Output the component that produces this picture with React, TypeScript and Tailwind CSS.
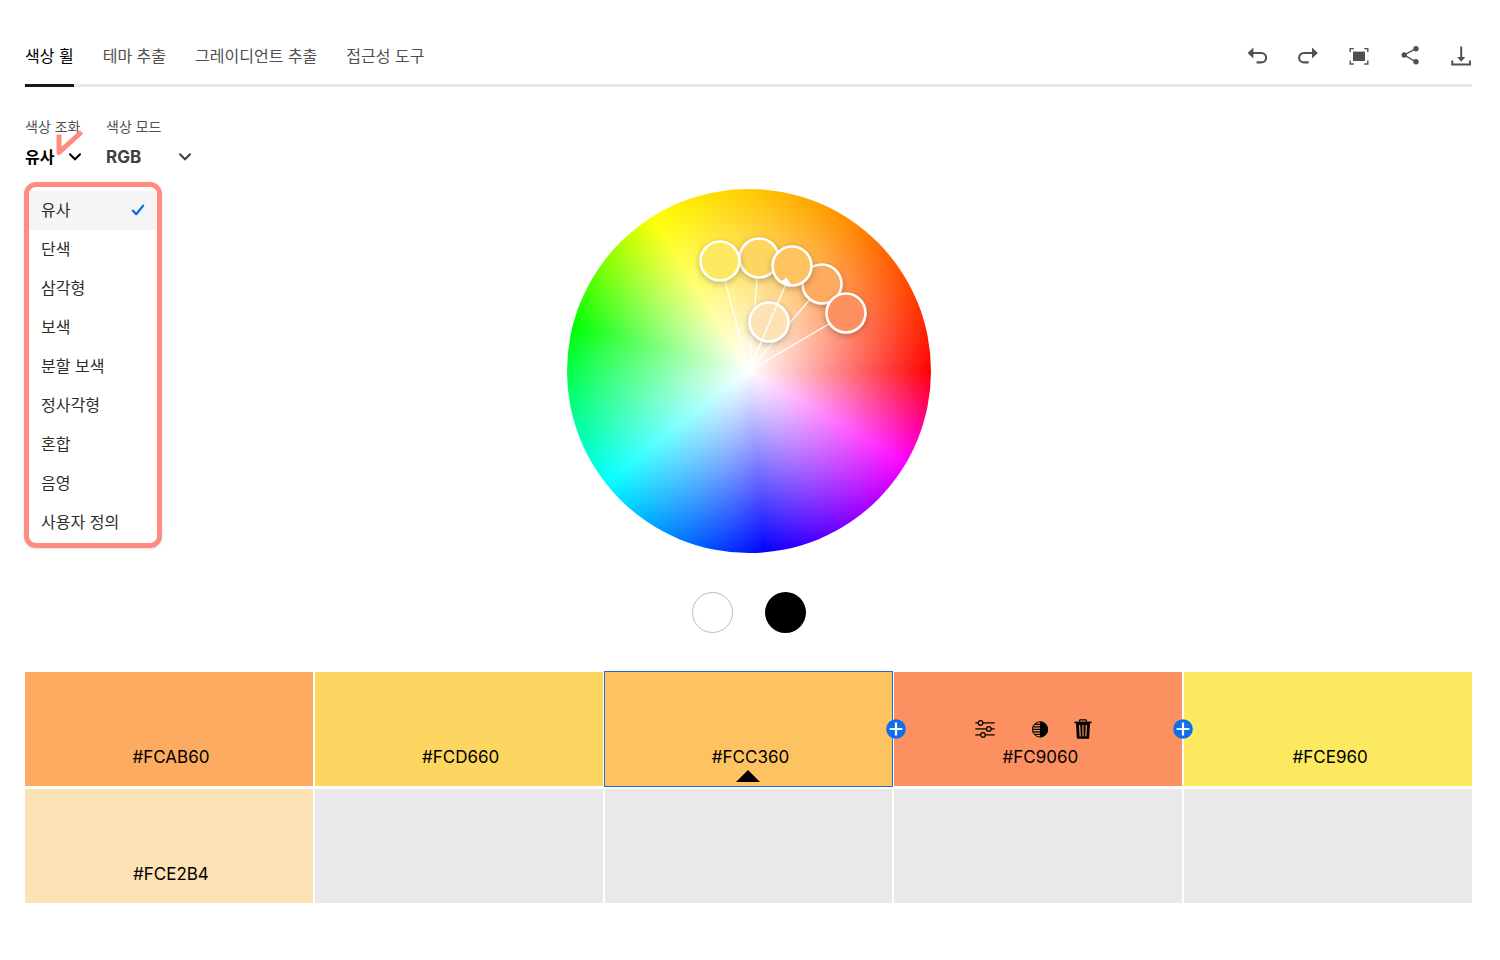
import React, { useState } from 'react';

const tabs = ['색상 휠', '테마 추출', '그레이디언트 추출', '접근성 도구'];

const harmonies = ['유사', '단색', '삼각형', '보색', '분할 보색', '정사각형', '혼합', '음영', '사용자 정의'];

const swatches: (string | null)[] = [
  '#FCAB60', '#FCD660', '#FCC360', '#FC9060', '#FCE960',
  '#FCE2B4', null, null, null, null,
];

const UndoIcon = () => (
  <svg viewBox="0 0 20 20" className="size-5" aria-hidden="true">
    <path d="M0.6 7 L6.4 1.6 V12.4 Z" fill="currentColor" />
    <path d="M5 7 H14.4 A4.7 4.7 0 0 1 14.4 16.4 H9.6" fill="none" stroke="currentColor" strokeWidth="2.1" />
  </svg>
);

const RedoIcon = () => (
  <svg viewBox="0 0 20 20" className="size-5" aria-hidden="true">
    <path d="M19.8 7 L14 1.6 V12.4 Z" fill="currentColor" />
    <path d="M15 7 H5.8 A4.7 4.7 0 0 0 5.8 16.4 H10.6" fill="none" stroke="currentColor" strokeWidth="2.1" />
  </svg>
);

const FullscreenIcon = () => (
  <svg viewBox="0 0 20 20" className="size-5" aria-hidden="true">
    <path
      d="M1.2 6 V2.6 H4.8 M15.2 2.6 H18.8 V6 M18.8 14.6 V18 H15.2 M4.8 18 H1.2 V14.6"
      fill="none"
      stroke="currentColor"
      strokeWidth="1.4"
    />
    <rect x="4" y="5.6" width="12" height="9.4" fill="currentColor" />
  </svg>
);

const ShareIcon = () => (
  <svg viewBox="0 0 20 20" className="size-5" aria-hidden="true">
    <path d="M16 2.7 L4.3 9 L16 15.8" fill="none" stroke="currentColor" strokeWidth="1.4" />
    <circle cx="4.2" cy="9" r="2.7" fill="currentColor" />
    <circle cx="16" cy="2.8" r="2.7" fill="currentColor" />
    <circle cx="16" cy="15.8" r="2.7" fill="currentColor" />
  </svg>
);

const DownloadIcon = () => (
  <svg viewBox="0 0 20 20" className="size-5" aria-hidden="true">
    <path d="M10.2 0.5 V13" stroke="currentColor" strokeWidth="2" />
    <path d="M6.2 11 H14.2 L10.2 15.8 Z" fill="currentColor" />
    <path d="M1.3 14.6 V18.6 H19.1 V14.6" fill="none" stroke="currentColor" strokeWidth="2" />
  </svg>
);

const ChevronIcon = () => (
  <svg viewBox="0 0 12 8" className="w-3 h-2 shrink-0" aria-hidden="true">
    <path d="M1 1.3 L6 6.3 L11 1.3" fill="none" stroke="currentColor" strokeWidth="2" strokeLinecap="round" />
  </svg>
);

const CheckIcon = () => (
  <svg viewBox="0 0 14 12" className="w-3.5 h-3 shrink-0 text-[#0d66e0]" aria-hidden="true">
    <path d="M1.8 6.6 L5.2 10.2 L12.2 1.6" fill="none" stroke="currentColor" strokeWidth="2.2" strokeLinecap="round" strokeLinejoin="round" />
  </svg>
);

const SlidersIcon = () => (
  <svg viewBox="0 0 20 18" className="w-5 h-[18px]" aria-hidden="true">
    <g fill="none" stroke="currentColor" strokeWidth="1.3">
      <path d="M0.3 2.9 H3.2 M8 2.9 H19.7 M0.3 8.9 H11.4 M16.2 8.9 H19.7 M0.3 14.9 H5.6 M10.4 14.9 H19.7" />
      <circle cx="5.6" cy="2.9" r="2.3" />
      <circle cx="13.8" cy="8.9" r="2.3" />
      <circle cx="8" cy="14.9" r="2.3" />
    </g>
  </svg>
);

const ContrastIcon = () => (
  <svg viewBox="0 0 18 18" className="size-[18px]" aria-hidden="true">
    <circle cx="9" cy="9.4" r="7.6" fill="none" stroke="currentColor" strokeWidth="1" />
    <path d="M9 1.4 A8 8 0 0 1 9 17.4 Z" fill="currentColor" />
    <path d="M3.6 4.4 H9 M2 6.9 H9 M1.4 9.4 H9 M2 11.9 H9 M3.6 14.4 H9" stroke="currentColor" strokeWidth="1.2" />
  </svg>
);

const TrashIcon = () => (
  <svg viewBox="0 0 18 20" className="w-[18px] h-5" aria-hidden="true">
    <path d="M5.6 2.8 V1.6 Q5.6 0.8 6.4 0.8 H11.6 Q12.4 0.8 12.4 1.6 V2.8" fill="none" stroke="currentColor" strokeWidth="1.2" />
    <path d="M0.4 2.6 H17.6 V4.2 H0.4 Z" fill="currentColor" />
    <path
      fillRule="evenodd"
      d="M2 4 H16 L15.2 19 Q15.1 19.8 14.2 19.8 H3.8 Q2.9 19.8 2.8 19 Z M5 6 L5.6 17.4 H6.8 L6.3 6 Z M8.4 6 V17.4 H9.6 V6 Z M11.7 6 L11.2 17.4 H12.4 L13 6 Z"
      fill="currentColor"
    />
  </svg>
);

const tools = [
  { label: '실행 취소', Icon: UndoIcon },
  { label: '다시 실행', Icon: RedoIcon },
  { label: '전체 화면', Icon: FullscreenIcon },
  { label: '공유', Icon: ShareIcon },
  { label: '다운로드', Icon: DownloadIcon },
];

function Handle({ x, y, color }: { x: number; y: number; color: string }) {
  return (
    <circle
      cx={x}
      cy={y}
      r="19.5"
      fill={color}
      stroke="white"
      strokeWidth="2.6"
      className="drop-shadow-[0_2px_3px_rgba(0,0,0,0.25)]"
    />
  );
}

function ColorWheel() {
  return (
    <div className="size-[364px] rounded-full bg-[radial-gradient(closest-side,#ffffff,rgba(255,255,255,0)),conic-gradient(#ffca00_0deg,#ff9500_30deg,#ff0000_90deg,#ff00ff_120deg,#0000ff_175deg,#00ffff_232deg,#00ff00_285deg,#ffff00_328deg,#ffca00_360deg)]">
      <svg viewBox="0 0 364 364" className="size-full" role="img" aria-label="색상 휠">
        <g stroke="white" strokeWidth="1.3">
          <path d="M182 182 L153 73" />
          <path d="M182 182 L192 70" />
          <path d="M182 182 L255 96" />
          <path d="M182 182 L279 125" />
        </g>
        <Handle x={202} y={133} color="#FCE2B4" />
        <path d="M182 182 L221 90" stroke="white" strokeWidth="1.3" />
        <Handle x={255} y={95} color="#FCAB60" />
        <Handle x={279} y={124} color="#FC9060" />
        <Handle x={192} y={69} color="#FCD660" />
        <Handle x={225} y={77} color="#FCC360" />
        <path d="M219.5 88.5 L224 95.5 L213.5 93 Z" fill="white" />
        <Handle x={153} y={72} color="#FCE960" />
      </svg>
    </div>
  );
}

function AddButton({ className }: { className: string }) {
  return (
    <button type="button" aria-label="색상 추가" className={`absolute top-[47px] z-10 size-5 cursor-pointer ${className}`}>
      <svg viewBox="0 0 20 20" className="size-5" aria-hidden="true">
        <circle cx="10" cy="10" r="9.8" fill="#0d6ef0" />
        <path d="M10 3.6 V16.4 M3.6 10 H16.4" stroke="white" strokeWidth="2.2" />
      </svg>
    </button>
  );
}

export default function App() {
  const [activeTab, setActiveTab] = useState(tabs[0]);
  const [harmony, setHarmony] = useState(harmonies[0]);
  const [open, setOpen] = useState(true);

  return (
    <div className="bg-white pl-[25px] pr-7 pt-8 pb-14 font-['Inter','Noto_Sans_CJK_KR',sans-serif] text-[#2c2c2c]">
      {/* Tabs + toolbar */}
      <header className="flex items-stretch justify-between border-b-3 border-[#e8e8e8]">
        <nav className="flex gap-[29px]">
          {tabs.map((tab) => (
            <button
              key={tab}
              type="button"
              onClick={() => setActiveTab(tab)}
              className={`-mb-[3px] border-b-3 h-[55px] text-[16px] leading-6 flex items-start pt-3 cursor-pointer ${
                tab === activeTab ? 'border-[#1a1a1a] text-black' : 'border-transparent text-[#505050]'
              }`}
            >
              {tab}
            </button>
          ))}
        </nav>
        <div className="flex items-start gap-[31px] pt-3.5 pr-px text-[#505050]">
          {tools.map(({ label, Icon }) => (
            <button key={label} type="button" aria-label={label} className="cursor-pointer">
              <Icon />
            </button>
          ))}
        </div>
      </header>

      {/* Harmony and mode */}
      <div className="flex items-start gap-6 pt-[30px]">
        <div className="relative w-[57px]">
          <p id="harmony-label" className="text-[14px] leading-5 text-[#505050] whitespace-nowrap">색상 조화</p>
          <button
            type="button"
            aria-haspopup="listbox"
            aria-expanded={open}
            aria-labelledby="harmony-label harmony-value"
            onClick={() => setOpen(!open)}
            className="mt-2 flex w-full items-center justify-between pr-px text-[16px] leading-6 font-bold text-black whitespace-nowrap cursor-pointer"
          >
            <span id="harmony-value">{harmony}</span>
            <ChevronIcon />
          </button>
          <svg viewBox="0 0 30 26" className="absolute left-[30px] top-3 w-[30px] h-[26px] pointer-events-none" aria-hidden="true">
            <path d="M4 5.5 V23.4 L26.5 3" fill="none" stroke="#ff8b81" strokeWidth="5" strokeLinejoin="round" />
          </svg>

          {open && (
            <ul
              role="listbox"
              aria-labelledby="harmony-label"
              className="absolute -left-px top-[65px] z-20 w-[138px] rounded-xl border-5 border-[#ff8b81] bg-white pt-1 pb-px shadow-sm"
            >
              {harmonies.map((item) => (
                <li key={item} role="option" aria-selected={item === harmony}>
                  <button
                    type="button"
                    onClick={() => setHarmony(item)}
                    className={`flex h-[39px] w-full items-center justify-between px-3 pb-0.5 text-[16px] leading-6 cursor-pointer ${
                      item === harmony ? 'bg-[#f5f5f5]' : 'hover:bg-[#f5f5f5]'
                    }`}
                  >
                    {item}
                    {item === harmony && <CheckIcon />}
                  </button>
                </li>
              ))}
            </ul>
          )}
        </div>

        <div className="w-[86px]">
          <label htmlFor="mode" className="block text-[14px] leading-5 text-[#505050]">색상 모드</label>
          <div className="mt-2 flex items-center pr-px text-[#404040]">
            <select
              id="mode"
              defaultValue="RGB"
              className="w-full -mr-3 appearance-none bg-transparent text-[17px] leading-6 font-bold cursor-pointer"
            >
              <option>RGB</option>
              <option>CMYK</option>
              <option>LAB</option>
            </select>
            <ChevronIcon />
          </div>
        </div>
      </div>

      {/* Wheel */}
      <main className="flex flex-col items-center pt-5">
        <ColorWheel />
        <div className="mt-[39px] flex gap-8">
          <button type="button" aria-label="흰색" className="size-[41px] rounded-full border border-[#bcbcbc] bg-white cursor-pointer" />
          <button type="button" aria-label="검정" className="size-[41px] rounded-full bg-black cursor-pointer" />
        </div>
      </main>

      {/* Swatches */}
      <section className="mt-[39px] grid grid-cols-5 gap-x-0.5 gap-y-[3px]">
        {swatches.map((hex, i) => (
          <div
            key={i}
            className={`relative flex h-[114px] flex-col items-center justify-end ${i === 2 ? 'outline-1 outline-[#1a6fe0]' : ''} ${
              hex ? '' : 'bg-[#e9e9e9]'
            }`}
            style={hex ? { backgroundColor: hex } : undefined}
          >
            {i === 3 && (
              <>
                <AddButton className="-left-2" />
                <AddButton className="-right-[11px]" />
                <div className="flex items-center pr-2.5 pb-1.5 text-black">
                  <button type="button" aria-label="색상 조정" className="mr-9 cursor-pointer"><SlidersIcon /></button>
                  <button type="button" aria-label="대비" className="mr-[25px] cursor-pointer"><ContrastIcon /></button>
                  <button type="button" aria-label="삭제" className="cursor-pointer"><TrashIcon /></button>
                </div>
              </>
            )}
            {hex && <p className="pl-1 pb-[17px] text-[17px] leading-6 text-black">{hex}</p>}
            {i === 2 && (
              <svg viewBox="0 0 24 12" className="absolute bottom-1 w-6 h-3" aria-hidden="true">
                <path d="M12 0 L24 12 H0 Z" fill="black" />
              </svg>
            )}
          </div>
        ))}
      </section>
    </div>
  );
}
